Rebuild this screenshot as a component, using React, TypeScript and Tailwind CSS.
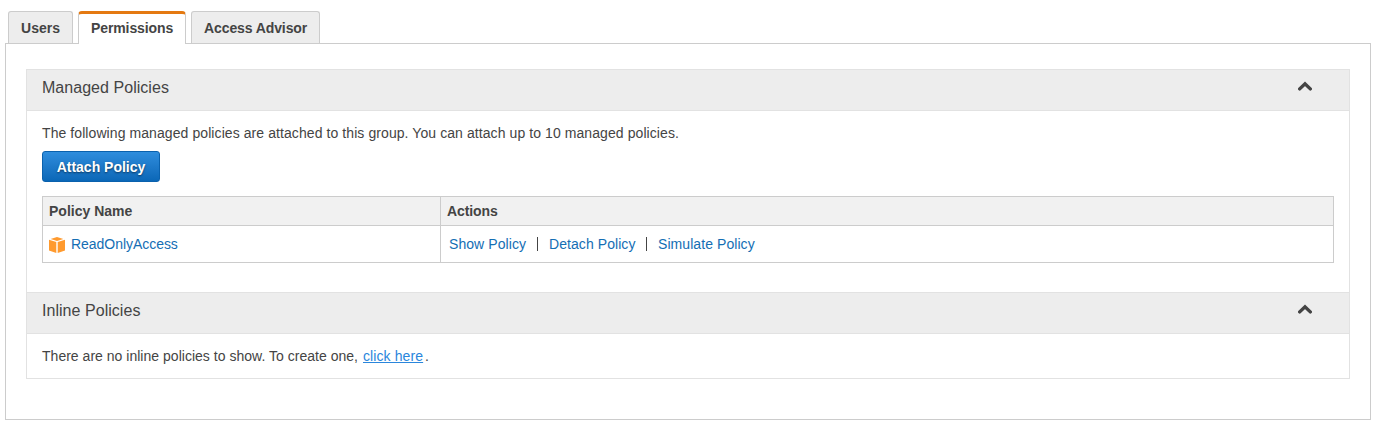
import React from "react";

function Chevron() {
  return (
    <svg className="mr-[37px] mt-[11px] h-[10px] w-[14px]" viewBox="0 0 14 10" fill="none" stroke="#444" strokeWidth="3.4">
      <path d="M1.7 7.9 L7 2.8 L12.3 7.9" strokeLinecap="round" />
    </svg>
  );
}

function Cube() {
  return (
    <svg className="mt-px h-4 w-4 shrink-0" viewBox="0 0 16 16" fill="#ff9a2e">
      <path d="M8 0 L14.4 1.9 L8 3.9 L1.6 1.9 Z" />
      <path d="M0 2.8 L7.3 5 V16 L0 13.4 Z" />
      <path d="M16 2.8 L8.7 5 V16 L16 13.4 Z" />
    </svg>
  );
}

function Separator() {
  return <i className="mr-[11px] h-[14px] w-px bg-[#444]" />;
}

function SectionHeader({ title }: { title: string }) {
  return (
    <div className="flex h-[42px] items-start justify-between border-y border-[#e2e2e2] bg-[#ededed] pl-[15px]">
      <h2 className="mt-[8px] text-base leading-5 tracking-[0.04px]">{title}</h2>
      <Chevron />
    </div>
  );
}

export default function App() {
  return (
    <main className="h-[428px] w-[1382px] bg-white pl-[5px] pt-[11px] font-['Liberation_Sans',Arial,sans-serif] text-sm leading-5 text-[#444]">
      <nav className="relative z-10 ml-[3px] flex h-8 gap-[5px] font-bold">
        <button className="flex w-[65px] justify-center rounded-t-[3px] border border-b-0 border-[#ccc] bg-[#ededed] pt-[6px]">
          <span>Users</span>
        </button>
        <button className="flex h-[33px] w-[108px] overflow-hidden rounded-t-[4px] border border-b-0 border-t-[3px] border-[#ccc] border-t-[#e47911] bg-white pl-[12px] pt-[4px]">
          <span className="tracking-[-0.1px]">Permissions</span>
        </button>
        <button className="flex w-[129px] rounded-t-[3px] border border-b-0 border-[#ccc] bg-[#ededed] pl-[12px] pt-[6px]">
          <span className="whitespace-nowrap tracking-[-0.1px]">Access Advisor</span>
        </button>
      </nav>
      <section className="h-[377px] w-[1366px] border border-[#ccc] pl-5 pt-[25px]">
        <div className="h-[310px] w-[1324px] border-x border-b border-[#e2e2e2]">
          <SectionHeader title="Managed Policies" />
          <div className="h-[181px] pl-[15px] pt-[12px]">
            <p className="tracking-[0.081px]">The following managed policies are attached to this group. You can attach up to 10 managed policies.</p>
            <button className="mt-[8px] flex h-[31px] w-[118px] items-center justify-center rounded-[3px] border border-[#0a61ad] bg-linear-to-b from-[#2e8ddd] to-[#0a67b7] font-bold text-white [text-shadow:0_1px_2px_#0008]">
              <span>Attach Policy</span>
            </button>
            <table className="mt-[14px] w-[1292px] table-fixed border-collapse text-left">
              <thead>
                <tr className="h-[29px] bg-[#f1f1f1]">
                  <th className="w-[398px] border border-[#ccc] p-0 pl-[6px]">Policy Name</th>
                  <th className="border border-[#ccc] p-0 pl-[6px] tracking-[-0.1px]">Actions</th>
                </tr>
              </thead>
              <tbody>
                <tr className="h-[37px] text-[#146eb4]">
                  <td className="border border-[#ccc] p-0 pl-[6px]">
                    <div className="flex items-center gap-[6px]"><Cube /><a className="tracking-[-0.04px]">ReadOnlyAccess</a></div>
                  </td>
                  <td className="border border-[#ccc] p-0 pl-[8px]">
                    <div className="flex items-center tracking-[0.07px]">
                      <a className="w-[88px]">Show Policy</a><Separator />
                      <a className="w-[97px]">Detach Policy</a><Separator />
                      <a>Simulate Policy</a>
                    </div>
                  </td>
                </tr>
              </tbody>
            </table>
          </div>
          <SectionHeader title="Inline Policies" />
          <p className="flex pl-[15px] pt-[12px]">
            <span className="w-[321px] tracking-[0.02px]">There are no inline policies to show. To create one,</span>
            <a className="w-[61px] tracking-[0.1px] text-[#2a86dc] underline">click here</a>
            <span className="pl-px">.</span>
          </p>
        </div>
      </section>
    </main>
  );
}
